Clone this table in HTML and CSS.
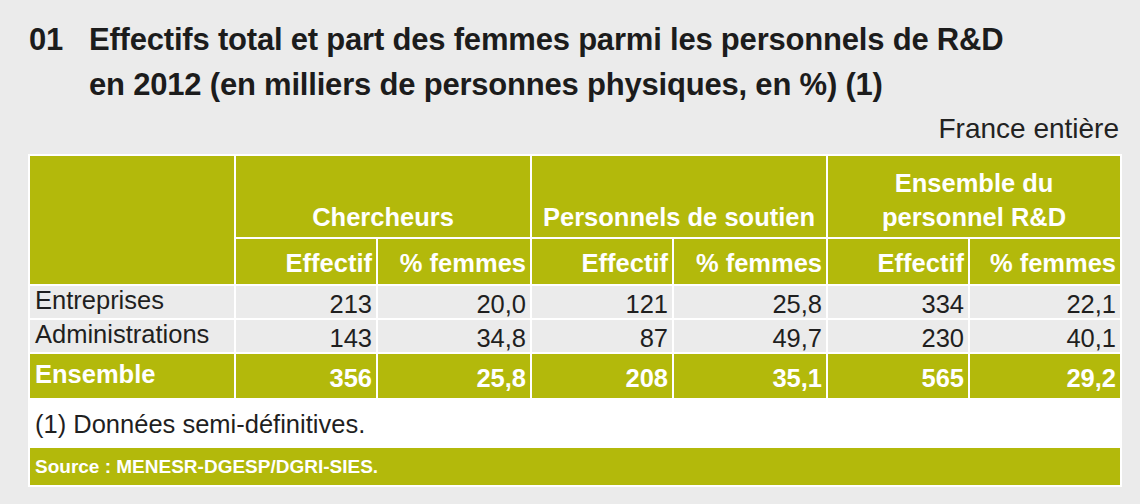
FILE: index.html
```html
<!DOCTYPE html>
<html lang="fr">
<head>
<meta charset="utf-8">
<title>Effectifs R&amp;D 2012</title>
<link rel="stylesheet" href="styles.css">
</head>
<body>
<div class="page">
  <h1 class="title">
    <span class="title-num">01</span>
    <span class="title-text">Effectifs total et part des femmes parmi les personnels de R&amp;D<br>en 2012 (en milliers de personnes physiques, en %) (1)</span>
  </h1>
  <div class="zone">France entière</div>
  <table class="data">
    <colgroup>
      <col class="c-label">
      <col class="c-eff">
      <col class="c-pct">
      <col class="c-eff">
      <col class="c-pct">
      <col class="c-eff">
      <col class="c-pct3">
    </colgroup>
    <thead>
      <tr class="h1">
        <th class="corner" rowspan="2"></th>
        <th colspan="2">Chercheurs</th>
        <th colspan="2">Personnels de soutien</th>
        <th colspan="2">Ensemble du<br>personnel R&amp;D</th>
      </tr>
      <tr class="h2">
        <th>Effectif</th>
        <th>% femmes</th>
        <th>Effectif</th>
        <th>% femmes</th>
        <th>Effectif</th>
        <th>% femmes</th>
      </tr>
    </thead>
    <tbody>
      <tr class="row">
        <td class="label">Entreprises</td>
        <td>213</td><td>20,0</td><td>121</td><td>25,8</td><td>334</td><td>22,1</td>
      </tr>
      <tr class="row">
        <td class="label">Administrations</td>
        <td>143</td><td>34,8</td><td>87</td><td>49,7</td><td>230</td><td>40,1</td>
      </tr>
      <tr class="total">
        <td class="label">Ensemble</td>
        <td>356</td><td>25,8</td><td>208</td><td>35,1</td><td>565</td><td>29,2</td>
      </tr>
    </tbody>
    <tfoot>
      <tr class="note">
        <td colspan="7">(1) Données semi-définitives.</td>
      </tr>
      <tr class="source">
        <td colspan="7">Source : MENESR-DGESP/DGRI-SIES.</td>
      </tr>
    </tfoot>
  </table>
</div>
</body>
</html>
```

FILE: styles.css
```css
html, body {
  margin: 0;
  background: #ebebeb;
}

body {
  font-family: "Liberation Sans", Arial, Helvetica, sans-serif;
  color: #1d1d1d;
}

.page {
  padding: 17px 18px 0 28px;
}

.title {
  display: flex;
  margin: 0;
  font-size: 31px;
  line-height: 45px;
  font-weight: bold;
  letter-spacing: -0.2px;
  color: #1c1c1c;
}

.title-num {
  flex: none;
  width: 60px;
  padding-left: 1px;
}

.zone {
  margin-top: 5.5px;
  padding-right: 3px;
  text-align: right;
  font-size: 28px;
  line-height: 32px;
  color: #222;
}

.data {
  margin-top: 9px;
  width: 1094px;
  table-layout: fixed;
  border-collapse: separate;
  border-spacing: 2px;
  background: #ffffff;
}

.c-label { width: 204px; }
.c-eff { width: 140px; }
.c-pct { width: 152px; }
.c-pct3 { width: 150px; }

.data th {
  background: #b3b90b;
  color: #ffffff;
  font-weight: bold;
  font-size: 25.5px;
  padding: 0;
}

.h1 th {
  height: 81px;
  vertical-align: bottom;
  text-align: center;
  line-height: 34px;
  padding-bottom: 3px;
  box-sizing: border-box;
}

.h1 th.corner {
  padding: 0;
}

.h2 th {
  height: 45px;
  box-sizing: border-box;
  vertical-align: bottom;
  text-align: right;
  line-height: 30px;
  padding: 0 4px 6px 0;
}

.data td {
  padding: 0 4px 0 0;
  text-align: right;
  font-size: 25.5px;
  white-space: nowrap;
}

.data td.label {
  text-align: left;
  padding: 0 0 0 5px;
}

.row td {
  background: #ebebeb;
  color: #1f1f1f;
  height: 32px;
  box-sizing: border-box;
  padding-top: 4px;
  line-height: 28px;
  vertical-align: top;
}

.total td {
  background: #b3b90b;
  color: #ffffff;
  font-weight: bold;
  height: 44px;
  box-sizing: border-box;
  padding-top: 4px;
  line-height: 40px;
  vertical-align: top;
}

.note td {
  background: #ffffff;
  color: #1f1f1f;
  text-align: left;
  height: 46.5px;
  box-sizing: border-box;
  padding: 3px 0 0 5px;
  line-height: 43.5px;
  vertical-align: top;
}

.source td {
  background: #b3b90b;
  color: #ffffff;
  font-weight: bold;
  font-size: 19px;
  text-align: left;
  height: 37px;
  box-sizing: border-box;
  padding: 0 0 0 5px;
  line-height: 37px;
  vertical-align: top;
}
```
